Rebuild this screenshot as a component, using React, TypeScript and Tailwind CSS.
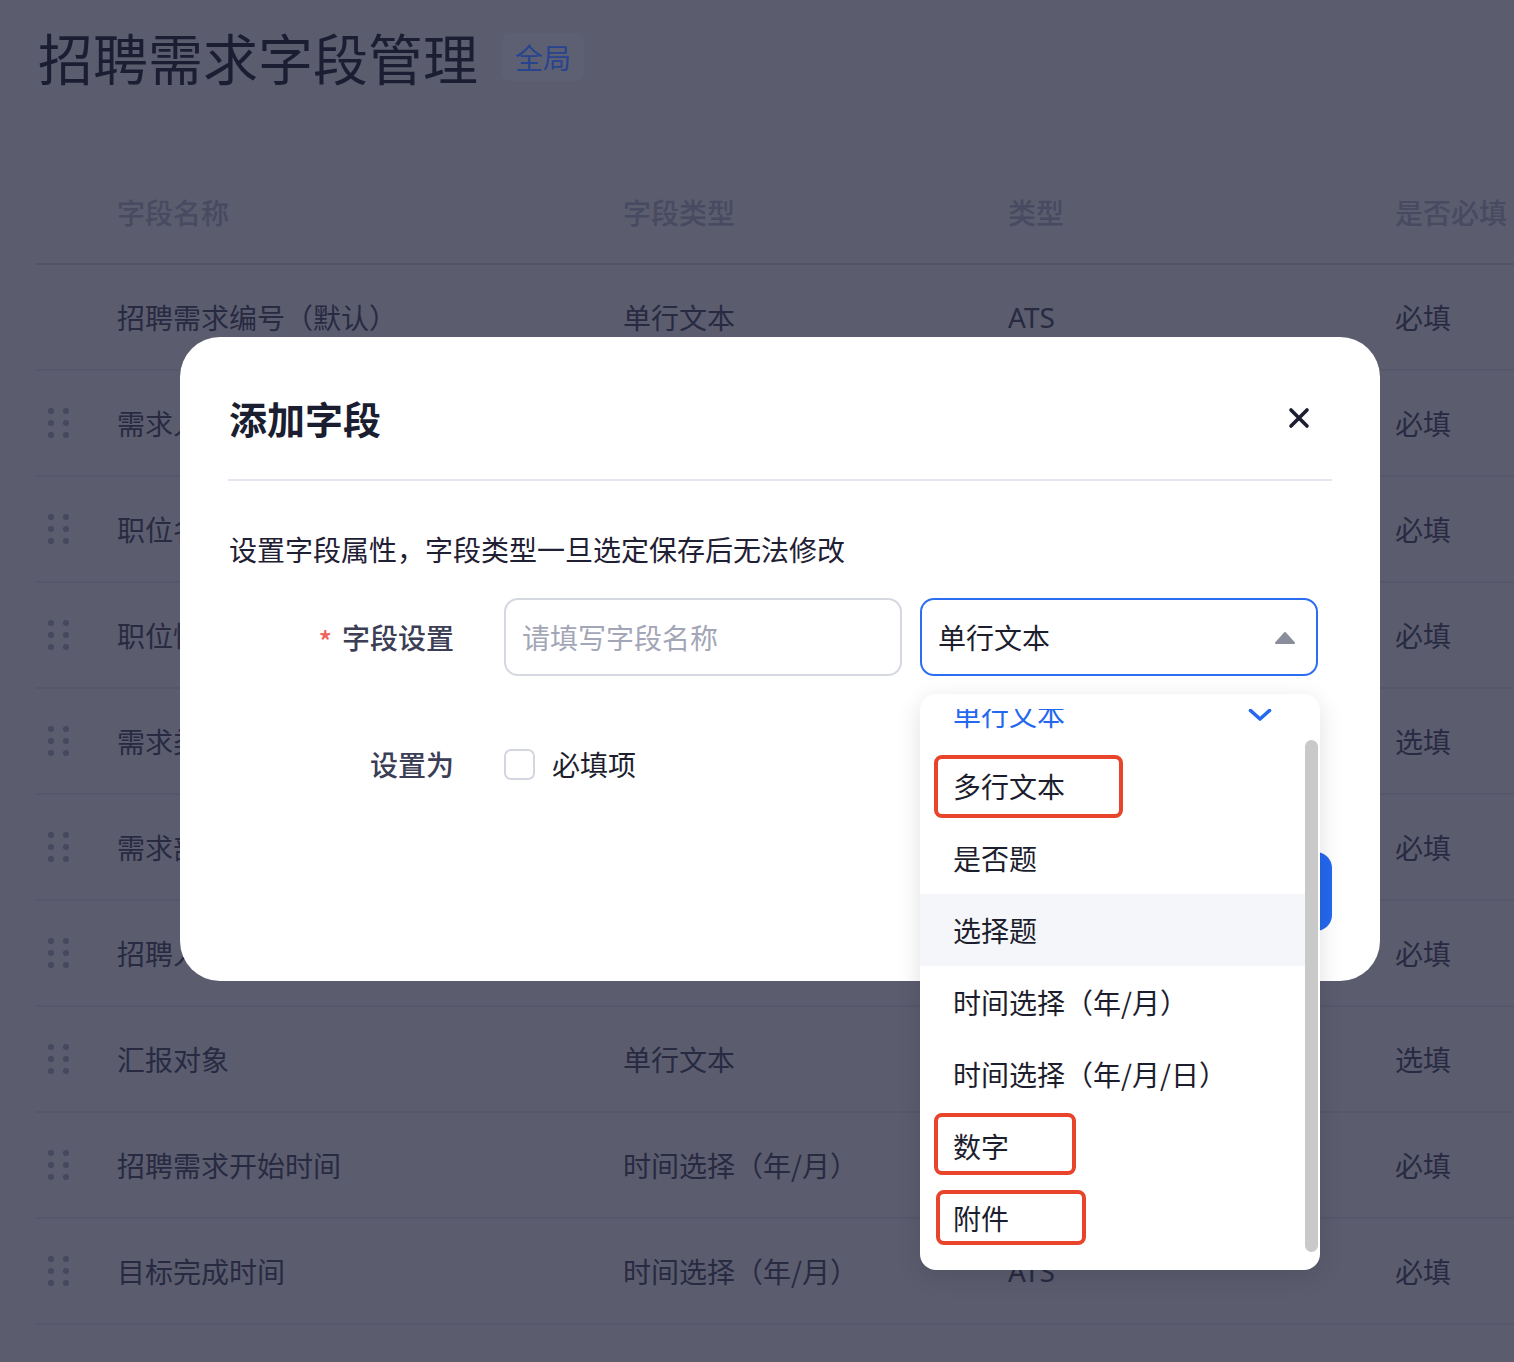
import React from 'react';

type Row = { name: string; type: string; kind: string; req: string; fixed?: boolean };

const rows: Row[] = [
  { name: '招聘需求编号（默认）', type: '单行文本', kind: 'ATS', req: '必填', fixed: true },
  { name: '需求人', type: '单行文本', kind: 'ATS', req: '必填' },
  { name: '职位名称', type: '单行文本', kind: 'ATS', req: '必填' },
  { name: '职位性质', type: '选择题', kind: 'ATS', req: '必填' },
  { name: '需求类型', type: '选择题', kind: 'ATS', req: '选填' },
  { name: '需求部门', type: '单行文本', kind: 'ATS', req: '必填' },
  { name: '招聘人数', type: '数字', kind: 'ATS', req: '必填' },
  { name: '汇报对象', type: '单行文本', kind: 'ATS', req: '选填' },
  { name: '招聘需求开始时间', type: '时间选择（年/月）', kind: 'ATS', req: '必填' },
  { name: '目标完成时间', type: '时间选择（年/月）', kind: 'ATS', req: '必填' },
];

const options = ['单行文本', '多行文本', '是否题', '选择题', '时间选择（年/月）', '时间选择（年/月/日）', '数字', '附件'];

const font = { fontFamily: '"Noto Sans CJK SC", "Noto Sans", sans-serif' };

const DragHandle = () => (
  <div className="grid grid-cols-2 gap-x-[12px] gap-y-[6px] w-[18px]">
    {[0, 1, 2, 3, 4, 5].map((i) => (
      <span key={i} className="w-[6px] h-[6px] rounded-full bg-[#45485f]" />
    ))}
  </div>
);

export default function App() {
  return (
    <div className="relative w-[1514px] h-[1362px] overflow-hidden bg-[#5b5c6e]" style={font}>
      {/* page title */}
      <div className="flex items-center pt-[24px] pl-[38px] h-[88px]">
        <h1 className="text-[55px] leading-[60px] text-[#1b1d33] font-normal">招聘需求字段管理</h1>
        <span className="ml-[24px] mt-[2px] px-[13px] py-[6px] rounded-[8px] bg-[#5d6073] text-[28px] leading-[36px] text-[#28448e]">全局</span>
      </div>

      {/* table */}
      <div className="mt-[73px] ml-[36px]">
        <div className="flex items-center h-[104px] border-b-2 border-[#535467] text-[28px] text-[#474a60] font-medium">
          <div className="w-[81px]" />
          <div className="w-[506px]">字段名称</div>
          <div className="w-[385px]">字段类型</div>
          <div className="w-[387px]">类型</div>
          <div className="flex-1">是否必填</div>
        </div>
        {rows.map((r) => (
          <div key={r.name} className="flex items-center h-[106px] border-b-2 border-[#56576a] text-[28px] text-[#282a42]">
            <div className="w-[81px] pl-[12px]">{!r.fixed && <DragHandle />}</div>
            <div className="w-[506px]">{r.name}</div>
            <div className="w-[385px]">{r.type}</div>
            <div className="w-[387px]" style={{ fontFamily: '"Noto Sans", sans-serif' }}>{r.kind}</div>
            <div className="flex-1">{r.req}</div>
          </div>
        ))}
      </div>

      {/* modal */}
      <div className="absolute left-[180px] top-[337px] w-[1200px] h-[644px] rounded-[40px] bg-white px-[48px] pt-[60px]">
        <div className="flex items-center justify-between h-[42px] pl-[1px]">
          <h2 className="text-[38px] leading-[42px] font-bold text-[#1b1d30]">添加字段</h2>
          <svg width="22" height="22" viewBox="0 0 22 22" className="mr-[22px]">
            <path d="M3 3 L19 19 M19 3 L3 19" stroke="#1b1d30" strokeWidth="3.6" strokeLinecap="round" />
          </svg>
        </div>
        <div className="mt-[40px] h-[2px] bg-[#e3e6ef]" />
        <p className="mt-[48px] pl-[1px] text-[28px] leading-[40px] text-[#1f2034]">设置字段属性，字段类型一旦选定保存后无法修改</p>

        <div className="mt-[29px] flex items-center">
          <div className="w-[226px] flex justify-end items-center text-[28px] font-medium text-[#3b3e55]">
            <span className="text-[#f0625a] mr-[10px] mt-[6px]">*</span>
            字段设置
          </div>
          <div className="ml-[50px] w-[398px] h-[78px] rounded-[14px] border-2 border-[#d6d8e1] flex items-center pl-[16px] text-[28px] text-[#a3a6b7]">
            请填写字段名称
          </div>
          <div className="ml-[18px] w-[398px] h-[78px] rounded-[14px] border-2 border-[#2b6ef2] flex items-center justify-between pl-[16px] pr-[20px] text-[28px] text-[#1c1e2e]">
            单行文本
            <svg width="22" height="13" viewBox="0 0 22 13">
              <path d="M2 12 L11 2 L20 12 Z" fill="#8a8d9c" stroke="#8a8d9c" strokeWidth="2" strokeLinejoin="round" />
            </svg>
          </div>
        </div>

        <div className="mt-[67px] flex items-center">
          <div className="w-[226px] text-right text-[28px] font-medium text-[#3b3e55]">设置为</div>
          <span className="ml-[50px] w-[31px] h-[31px] rounded-[7px] border-2 border-[#d3d6df] bg-white" />
          <span className="ml-[17px] text-[28px] text-[#1c1e2e]">必填项</span>
        </div>

        <div className="mt-[67px] flex justify-end">
          <div className="w-[150px] h-[79px] rounded-[16px] bg-[#2468f0]" />
        </div>
      </div>

      {/* dropdown */}
      <div className="absolute left-[920px] top-[694px] w-[400px] h-[576px] rounded-[16px] bg-white shadow-[0_6px_24px_rgba(0,0,0,0.12)] pt-[15px] pb-[16px]">
        <div className="relative h-full overflow-hidden">
          <div className="-mt-[31px] pr-[15px]">
            {options.map((o, i) => (
              <div
                key={o}
                className={`h-[72px] flex items-center justify-between pl-[33px] pr-[33px] text-[28px] ${
                  i === 0 ? 'text-[#2468f0]' : 'text-[#1c1e2e]'
                } ${o === '选择题' ? 'bg-[#f5f6f9]' : ''}`}
              >
                {o}
                {i === 0 && (
                  <svg width="24" height="14" viewBox="0 0 24 14" className="mt-[2px]">
                    <path d="M2.5 2.5 L12 11 L21.5 2.5" fill="none" stroke="#2468f0" strokeWidth="3.6" strokeLinecap="round" strokeLinejoin="round" />
                  </svg>
                )}
              </div>
            ))}
          </div>
        </div>
        <div className="absolute left-[385px] top-[46px] w-[13px] h-[512px] rounded-full bg-[#c9c9c9]" />
      </div>

      {/* annotation boxes */}
      <div className="absolute left-[934px] top-[755px] w-[189px] h-[63px] rounded-[8px] border-4 border-[#e8432b]" />
      <div className="absolute left-[934px] top-[1113px] w-[142px] h-[62px] rounded-[8px] border-4 border-[#e8432b]" />
      <div className="absolute left-[936px] top-[1190px] w-[150px] h-[55px] rounded-[8px] border-4 border-[#e8432b]" />
    </div>
  );
}
